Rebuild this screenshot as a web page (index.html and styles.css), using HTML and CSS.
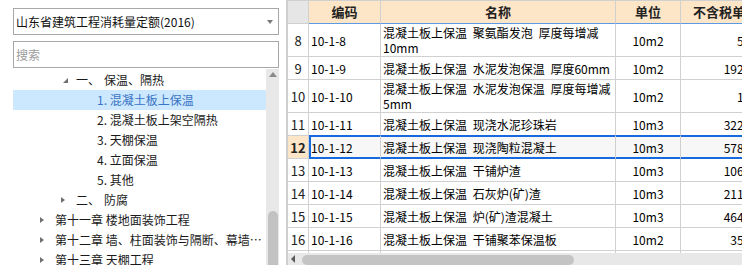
FILE: index.html
```html
<!DOCTYPE html>
<html lang="zh">
<head>
<meta charset="utf-8">
<title>定额</title>
<link rel="stylesheet" href="styles.css">
</head>
<body>
<div class="app">
  <aside class="side">
    <div class="combo"><span class="combo-text">山东省建筑工程消耗量定额(2016)</span><span class="combo-arrow"></span></div>
    <div class="search">搜索</div>
    <div class="tree-wrap">
      <ul class="tree">
        <li class="node l1"><span class="tw open"></span><span class="txt">一、<span class="gap"></span>保温、隔热</span></li>
        <li class="node l2 sel"><span class="tw"></span><span class="txt">1. 混凝土板上保温</span></li>
        <li class="node l2"><span class="tw"></span><span class="txt">2. 混凝土板上架空隔热</span></li>
        <li class="node l2"><span class="tw"></span><span class="txt">3. 天棚保温</span></li>
        <li class="node l2"><span class="tw"></span><span class="txt">4. 立面保温</span></li>
        <li class="node l2"><span class="tw"></span><span class="txt">5. 其他</span></li>
        <li class="node l1"><span class="tw closed"></span><span class="txt">二、<span class="gap"></span>防腐</span></li>
        <li class="node l0"><span class="tw closed"></span><span class="txt">第十一章 楼地面装饰工程</span></li>
        <li class="node l0"><span class="tw closed"></span><span class="txt">第十二章 墙、柱面装饰与隔断、幕墙工程</span></li>
        <li class="node l0"><span class="tw closed"></span><span class="txt">第十三章 天棚工程</span></li>
      </ul>
      <div class="vscroll"><span class="up"></span><span class="vspace"></span><span class="vthumb"></span></div>
    </div>
  </aside>
  <main class="grid">
    <div class="grid-view">
      <table>
        <colgroup><col class="c-no"><col class="c-code"><col class="c-name"><col class="c-unit"><col class="c-price"></colgroup>
        <thead>
          <tr class="hd"><th class="no"></th><th>编码</th><th>名称</th><th>单位</th><th>不含税单价</th></tr>
        </thead>
        <tbody>
          <tr class="tall"><td class="no">8</td><td class="code">10-1-8</td><td class="name">混凝土板上保温 聚氨酯发泡 厚度每增减10mm</td><td class="unit">10m2</td><td class="price">54.16</td></tr>
          <tr><td class="no">9</td><td class="code">10-1-9</td><td class="name">混凝土板上保温 水泥发泡保温 厚度60mm</td><td class="unit">10m2</td><td class="price">1923.07</td></tr>
          <tr class="tall"><td class="no">10</td><td class="code">10-1-10</td><td class="name">混凝土板上保温 水泥发泡保温 厚度每增减5mm</td><td class="unit">10m2</td><td class="price">16.03</td></tr>
          <tr class="pre"><td class="no">11</td><td class="code">10-1-11</td><td class="name">混凝土板上保温 现浇水泥珍珠岩</td><td class="unit">10m3</td><td class="price">3220.46</td></tr>
          <tr class="cur"><td class="no">12</td><td class="code">10-1-12</td><td class="name">混凝土板上保温 现浇陶粒混凝土</td><td class="unit">10m3</td><td class="price">5786.92</td></tr>
          <tr><td class="no">13</td><td class="code">10-1-13</td><td class="name">混凝土板上保温 干铺炉渣</td><td class="unit">10m3</td><td class="price">1063.58</td></tr>
          <tr><td class="no">14</td><td class="code">10-1-14</td><td class="name">混凝土板上保温 石灰炉(矿)渣</td><td class="unit">10m3</td><td class="price">2112.40</td></tr>
          <tr><td class="no">15</td><td class="code">10-1-15</td><td class="name">混凝土板上保温 炉(矿)渣混凝土</td><td class="unit">10m3</td><td class="price">4643.71</td></tr>
          <tr><td class="no">16</td><td class="code">10-1-16</td><td class="name">混凝土板上保温 干铺聚苯保温板</td><td class="unit">10m2</td><td class="price">355.80</td></tr>
          <tr><td class="no">17</td><td class="code">10-1-17</td><td class="name">混凝土板上保温 干铺加气混凝土块</td><td class="unit">10m3</td><td class="price">3012.55</td></tr>
        </tbody>
      </table>
    </div>
    <div class="hscroll"><span class="left"></span><span class="hthumb"></span></div>
  </main>
</div>
</body>
</html>
```
FILE: styles.css
```css
* { box-sizing: border-box; }
html, body { margin: 0; padding: 0; }
body {
  width: 742px;
  height: 265px;
  overflow: hidden;
  background: #fff;
  font-family: "Noto Sans CJK SC", "Noto Sans", sans-serif;
  font-size: 12px;
  color: #000;
}
.app { display: flex; height: 265px; }

/* left panel */
.side {
  width: 286px;
  flex: none;
  padding: 8px 7px 0 13px;
  display: flex;
  flex-direction: column;
}
.combo {
  height: 27px;
  border: 1px solid #a8a8a8;
  display: flex;
  align-items: center;
  padding: 0 5px 0 2px;
}
.combo-text { flex: 1; line-height: 25px; white-space: nowrap; color: #111; }
.combo-arrow {
  width: 0; height: 0;
  border-left: 3.5px solid transparent;
  border-right: 3.5px solid transparent;
  border-top: 4px solid #7a7a7a;
}
.search {
  height: 27px;
  margin-top: 6px;
  border: 1px solid #a8a8a8;
  color: #9c9c9c;
  line-height: 25px;
  padding-left: 2px;
}
.tree-wrap {
  flex: 1;
  min-height: 0;
  margin-top: 1px;
  display: flex;
  overflow: hidden;
}
.tree {
  list-style: none;
  margin: 0;
  padding: 1px 0 0 0;
  flex: 1;
  min-width: 0;
}
.node {
  display: flex;
  align-items: center;
  height: 20px;
  line-height: 20px;
  color: #1a1a1a;
}
.node.sel { background: #cce8ff; color: #3a74c4; }
.l0 { padding-left: 27px; }
.l1 { padding-left: 48px; }
.l2 { padding-left: 69px; }
.tw { width: 15px; height: 20px; flex: none; display: flex; align-items: flex-start; }
.tw.closed::before {
  content: "";
  margin-top: 7px;
  border-left: 4px solid #707070;
  border-top: 3.5px solid transparent;
  border-bottom: 3.5px solid transparent;
}
.tw.open::before {
  content: "";
  margin-top: 8px;
  margin-left: 2px;
  border-right: 5px solid #707070;
  border-top: 5px solid transparent;
}
.txt {
  flex: 1;
  min-width: 0;
  white-space: nowrap;
  overflow: hidden;
  text-overflow: ellipsis;
  padding-right: 4px;
}
.gap { display: inline-block; width: 4px; }
.vscroll {
  width: 13px;
  flex: none;
  background: #e8e8e8;
  display: flex;
  flex-direction: column;
  align-items: center;
}
.vscroll .up {
  margin-top: 3px;
  width: 0; height: 0;
  border-left: 4.5px solid transparent;
  border-right: 4.5px solid transparent;
  border-bottom: 5px solid #8a8a8a;
}
.vspace { flex: 1; }
.vthumb {
  width: 10px;
  height: 54px;
  border-radius: 5px 5px 0 0;
  background: #c2c2c2;
}

/* grid */
.grid {
  flex: 1;
  min-width: 0;
  border-left: 2px solid #cfcfcf;
  display: flex;
  flex-direction: column;
  overflow: hidden;
}
.grid-view { flex: 1; min-height: 0; overflow: hidden; }
table {
  border-collapse: separate;
  border-spacing: 0;
  table-layout: fixed;
  width: 483px;
}
.c-no { width: 21px; }
.c-code { width: 72px; }
.c-name { width: 235px; }
.c-unit { width: 65px; }
.c-price { width: 90px; }
tr { height: 23px; }
tr.hd { height: 24px; }
tr.tall { height: 33px; }
th, td {
  border-right: 1px solid #d0d0d0;
  border-bottom: 1px solid #d0d0d0;
  padding: 0 2px;
  overflow: hidden;
  white-space: nowrap;
  vertical-align: middle;
}
th {
  background: #fde5c7;
  border-top: 1px solid #d0d0d0;
  border-bottom-color: #5b9be6;
  font-size: 13px;
  font-weight: bold;
  color: #222;
  text-align: center;
  line-height: 22px;
}
th.no { background: #e6e6e6; border-bottom-color: #d0d0d0; }
td { line-height: 15px; }
td.no { text-align: center; font-size: 13px; color: #222; padding: 0; }
td.name { white-space: normal; word-spacing: 3px; }
td.unit { text-align: center; }
td.price { text-align: right; padding-right: 3px; }
tr.pre td:not(.no) { border-bottom-color: #1769e0; }
tr.cur td:not(.no) {
  background: #f7f7f7;
  border-bottom-color: #1769e0;
  box-shadow: inset 0 1px 0 #1769e0, inset 0 -1px 0 #1769e0;
}
tr.cur td.code {
  box-shadow: inset 2px 0 0 #1769e0, inset 0 1px 0 #1769e0, inset 0 -1px 0 #1769e0;
}
tr.cur td.no { background: #fde5c7; font-weight: bold; }

.hscroll {
  height: 12px;
  flex: none;
  background: #e8e8e8;
  display: flex;
  align-items: center;
}
.hscroll .left {
  margin-left: 3px;
  width: 0; height: 0;
  border-right: 4px solid #5a5a5a;
  border-top: 4px solid transparent;
  border-bottom: 4px solid transparent;
}
.hthumb {
  margin-left: 7px;
  margin-top: 2px;
  width: 272px;
  height: 10px;
  border-radius: 5px;
  background: #c4c4c4;
}
```
